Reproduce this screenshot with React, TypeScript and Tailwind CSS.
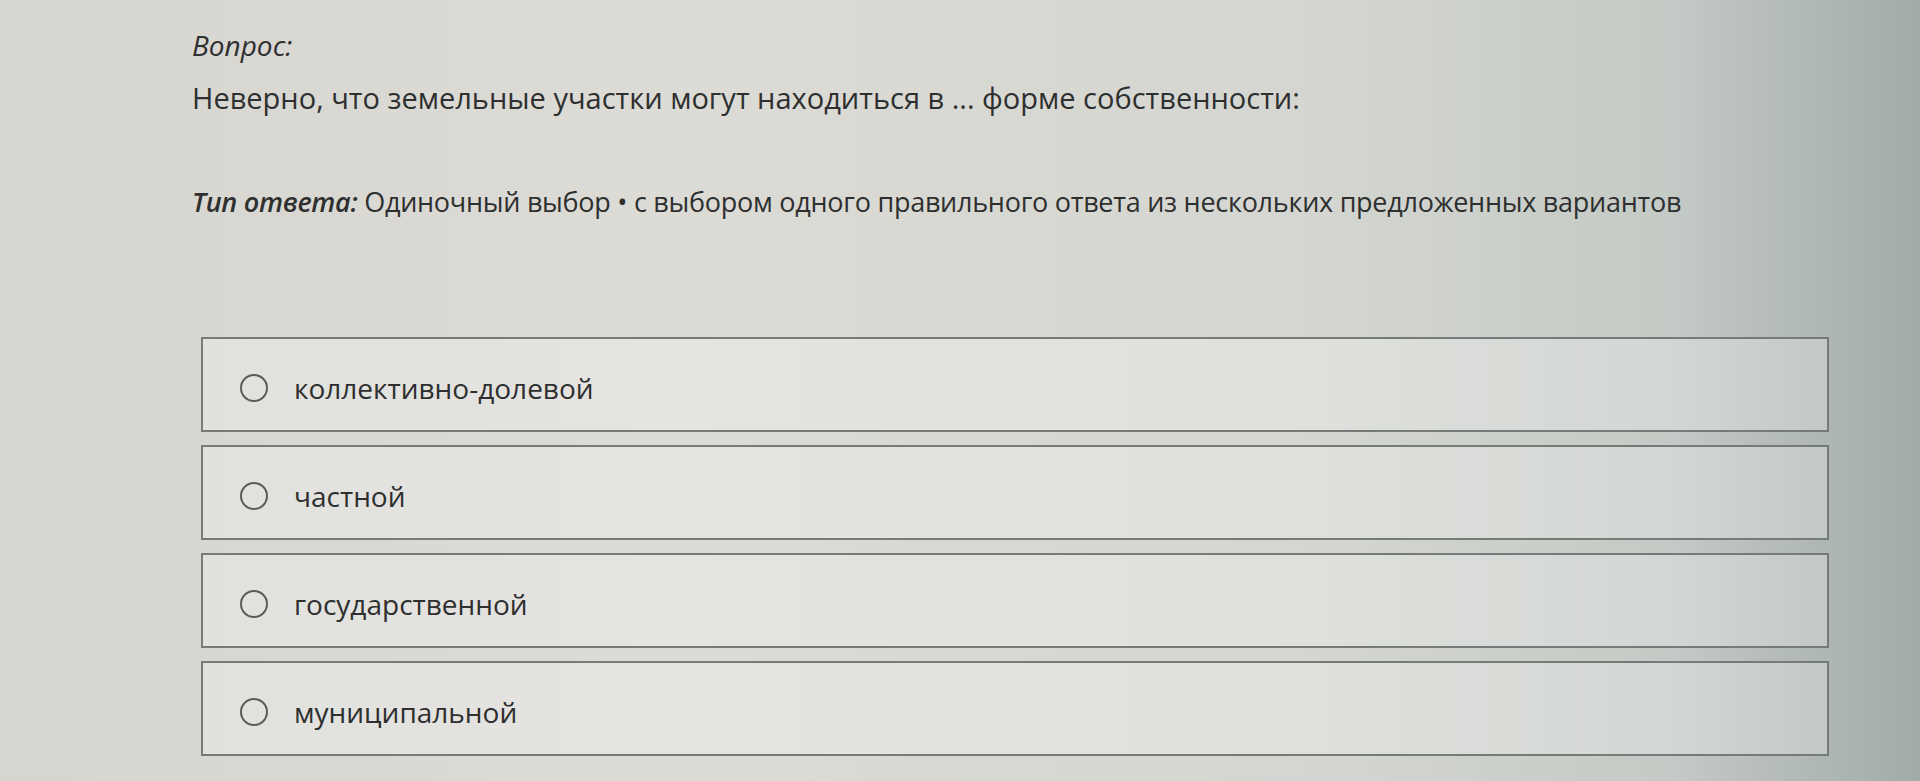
const options = ["коллективно-долевой", "частной", "государственной", "муниципальной"]

const App = () => {
  return (
    <div
      className="h-[781px] w-full overflow-hidden bg-[linear-gradient(90deg,#d6d5d0_0%,#dcdbd6_35%,#d5d6d1_68%,#c4cac5_87%,#a2aba7_100%)] pl-[192px] pt-[25px] text-[#2e2f2f]"
      style={{ fontFamily: '"Open Sans", "Noto Sans", sans-serif' }}
    >
      <div className="text-[28px] leading-[40px] font-medium italic">Вопрос:</div>
      <div className="mt-[13px] text-[29px] leading-[40px]">
        Неверно, что земельные участки могут находиться в ... форме собственности:
      </div>
      <div className="mt-[64px] text-[27px] leading-[40px] tracking-[-0.01em]">
        <span className="font-semibold italic">Тип ответа:</span> Одиночный выбор • с выбором одного правильного ответа из
        нескольких предложенных вариантов
      </div>
      <div className="ml-[9px] mt-[115px] flex w-[1628px] flex-col gap-[13px]">
        {options.map((opt) => (
          <div
            key={opt}
            className="flex h-[95px] items-center border-2 border-[#767a79] bg-white/25 pl-[37px] pt-[6px]"
          >
            <span className="h-[28px] w-[28px] shrink-0 rounded-full border-2 border-[#5a5c5c]" />
            <span className="ml-[26px] text-[28px] leading-[40px]">{opt}</span>
          </div>
        ))}
      </div>
    </div>
  )
}

export default App
